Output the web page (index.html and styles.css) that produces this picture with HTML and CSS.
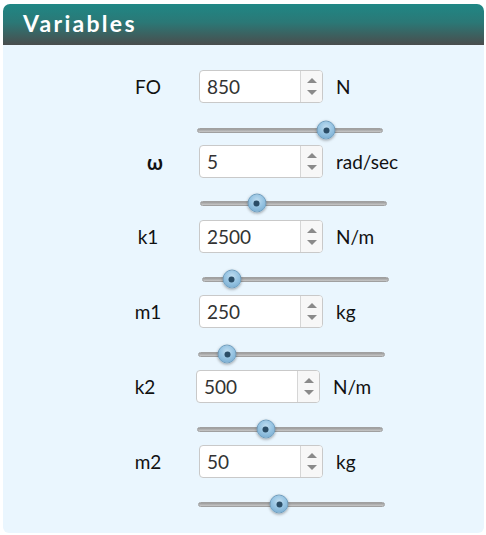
FILE: index.html
```html
<!DOCTYPE html>
<html>
<head>
<meta charset="utf-8">
<link rel="stylesheet" href="styles.css">
</head>
<body>
<div class="panel">
  <div class="header"><span class="title">Variables</span></div>
  <div class="content">
    <div class="group">
      <div class="row">
        <span class="label">FO</span>
        <div class="num"><span class="val">850</span><span class="spin"><i class="up"></i><i class="down"></i></span></div>
        <span class="unit">N</span>
      </div>
      <div class="slider s-fo"><div class="track"></div><div class="thumb" style="left: 69.4%"></div></div>
    </div>
    <div class="group">
      <div class="row">
        <span class="label bold">ω</span>
        <div class="num"><span class="val">5</span><span class="spin"><i class="up"></i><i class="down"></i></span></div>
        <span class="unit">rad/sec</span>
      </div>
      <div class="slider s-w"><div class="track"></div><div class="thumb" style="left: 30.4%"></div></div>
    </div>
    <div class="group">
      <div class="row">
        <span class="label">k1</span>
        <div class="num"><span class="val">2500</span><span class="spin"><i class="up"></i><i class="down"></i></span></div>
        <span class="unit">N/m</span>
      </div>
      <div class="slider s-k1"><div class="track"></div><div class="thumb" style="left: 16%"></div></div>
    </div>
    <div class="group">
      <div class="row">
        <span class="label">m1</span>
        <div class="num"><span class="val">250</span><span class="spin"><i class="up"></i><i class="down"></i></span></div>
        <span class="unit">kg</span>
      </div>
      <div class="slider"><div class="track"></div><div class="thumb" style="left: 15.7%"></div></div>
    </div>
    <div class="group">
      <div class="row r-k2">
        <span class="label">k2</span>
        <div class="num"><span class="val">500</span><span class="spin"><i class="up"></i><i class="down"></i></span></div>
        <span class="unit">N/m</span>
      </div>
      <div class="slider s-k2"><div class="track"></div><div class="thumb" style="left: 36.9%"></div></div>
    </div>
    <div class="group">
      <div class="row">
        <span class="label">m2</span>
        <div class="num"><span class="val">50</span><span class="spin"><i class="up"></i><i class="down"></i></span></div>
        <span class="unit">kg</span>
      </div>
      <div class="slider"><div class="track"></div><div class="thumb" style="left: 43.5%"></div></div>
    </div>
  </div>
</div>
</body>
</html>
```
FILE: styles.css
```css
* { box-sizing: border-box; }
body {
  margin: 0;
  background: #ffffff;
  font-family: Lato, "Open Sans", sans-serif;
}
.panel {
  margin: 4px 2px 0 3px;
  width: 481px;
}
.header {
  height: 41px;
  border-radius: 7px 7px 0 0;
  background: linear-gradient(to bottom, #1f8785 0%, #2b7876 45%, #4a4d4d 100%);
  display: flex;
  align-items: center;
  padding-left: 20px;
}
.title {
  color: #ffffff;
  font-family: Lato, sans-serif;
  font-weight: 700;
  font-size: 23px;
  letter-spacing: 2.3px;
  margin-top: -3px;
}
.content {
  background: #eaf6fe;
  height: 488px;
  border-radius: 0 0 6px 6px;
  padding-top: 25px;
  display: flex;
  flex-direction: column;
}
.group {
  display: flex;
  flex-direction: column;
  height: 75px;
}
.row {
  display: flex;
  align-items: center;
  height: 33px;
  padding-left: 100px;
}
.r-k2 { padding-left: 97px; }
.label {
  width: 96px;
  text-align: center;
  font-size: 19px;
  color: #111;
  padding-right: 6px;
}
.label.bold { font-weight: 700; padding-left: 8px; padding-right: 0; font-size: 20px; }
.num {
  width: 124px;
  height: 33px;
  background: #ffffff;
  border: 1px solid #c9c9c9;
  border-radius: 4px;
  display: flex;
  align-items: stretch;
}
.val {
  flex: 1;
  display: flex;
  align-items: center;
  padding-left: 7px;
  font-size: 19px;
  color: #333;
}
.spin {
  width: 22px;
  border-left: 1px solid #d6d6d6;
  background: #f7f7f7;
  border-radius: 0 3px 3px 0;
  display: flex;
  flex-direction: column;
  align-items: center;
  justify-content: center;
  gap: 7px;
}
.spin i {
  display: block;
  width: 0;
  height: 0;
  border-left: 5px solid transparent;
  border-right: 5px solid transparent;
}
.spin .up { border-bottom: 5px solid #8a8a8a; }
.spin .down { border-top: 5px solid #8a8a8a; }
.unit {
  margin-left: 13px;
  font-size: 19px;
  color: #111;
}
.slider {
  position: relative;
  width: 187px;
  height: 18px;
  margin-top: 17px;
  margin-left: 195px;
  display: flex;
  align-items: center;
}
.s-fo { margin-left: 194px; width: 186px; margin-top: 18px; }
.s-w { margin-left: 197px; margin-top: 16px; }
.s-k1 { margin-left: 199px; }
.s-k2 { margin-left: 194px; width: 186px; }
.track {
  width: 100%;
  height: 5px;
  border-radius: 3px;
  background: linear-gradient(to bottom, #9b9b9b, #c8c8c8);
  border: 1px solid #a0a0a0;
}
.thumb {
  position: absolute;
  top: 50%;
  width: 19px;
  height: 19px;
  transform: translate(-50%, -50%);
  border-radius: 50%;
  background: radial-gradient(circle at 50% 35%, #c0ddf0 0%, #98c5e3 45%, #6fa5cb 100%);
  border: 1px solid #6f9dbd;
  box-shadow: 0 1px 3px rgba(0, 0, 0, 0.35);
}
.thumb::after {
  content: "";
  position: absolute;
  left: 50%;
  top: 50%;
  width: 6px;
  height: 6px;
  margin: -3px 0 0 -3px;
  border-radius: 50%;
  background: #2b4d66;
}
```
